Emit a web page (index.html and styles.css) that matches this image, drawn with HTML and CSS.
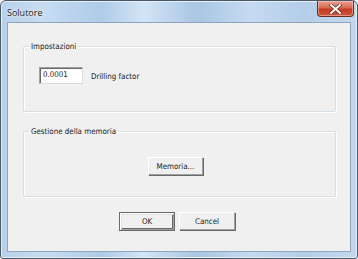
FILE: index.html
```html
<!DOCTYPE html>
<html>
<head>
<meta charset="utf-8">
<link rel="stylesheet" href="styles.css">
</head>
<body>
<div class="window">
  <div class="titlebar">
    <span class="title">Solutore</span>
    <div class="close">
      <svg width="13" height="10" viewBox="0 0 13 10">
        <path d="M2 1 L11 9 M11 1 L2 9" stroke="#6a2a1e" stroke-width="3.4" stroke-linecap="square" fill="none"/>
        <path d="M2 1 L11 9 M11 1 L2 9" stroke="#ffffff" stroke-width="2" stroke-linecap="square" fill="none"/>
      </svg>
    </div>
  </div>
  <div class="client">
    <div class="group g1">
      <span class="group-label">Impostazioni</span>
      <div class="field-row">
        <div class="textbox">0.0001</div>
        <span class="field-label">Drilling factor</span>
      </div>
    </div>
    <div class="group g2">
      <span class="group-label">Gestione della memoria</span>
      <div class="mem-row">
        <div class="btn mem">Memoria...</div>
      </div>
    </div>
    <div class="actions">
      <div class="btn default">OK</div>
      <div class="btn cancel">Cancel</div>
    </div>
  </div>
</div>
</body>
</html>
```
FILE: styles.css
```css
html, body {
  margin: 0;
  padding: 0;
  background: #ffffff;
}
body {
  width: 358px;
  height: 259px;
  overflow: hidden;
  font-family: "DejaVu Sans Condensed", "DejaVu Sans", sans-serif;
}
.window {
  box-sizing: border-box;
  width: 358px;
  height: 259px;
  border: 1px solid #4a5866;
  border-radius: 6px 6px 3px 3px;
  background: linear-gradient(90deg, #b7d0ea 0%, #c7dcf1 12%, #aecbe8 28%, #d3e4f5 40%, #a9c6e4 55%, #c5daf0 70%, #b4cee9 85%, #c3d8ee 100%);
  padding: 0 6px 6px 6px;
  display: flex;
  flex-direction: column;
  box-shadow: inset 0 0 0 1px #e6f0fa;
}
.titlebar {
  height: 21px;
  display: flex;
  align-items: flex-start;
  justify-content: space-between;
  flex-shrink: 0;
}
.title {
  font-family: "Open Sans", "Liberation Sans", sans-serif;
  font-size: 9px;
  color: #1a1a1a;
  margin-top: 5px;
  text-shadow: 0 0 4px #eaf3fb, 0 0 2px #ffffff;
}
.close {
  width: 37px;
  height: 16px;
  margin-right: -3px;
  box-sizing: border-box;
  border: 1px solid #6b2a22;
  border-top: none;
  border-radius: 0 0 4px 4px;
  background: linear-gradient(180deg, #e9a190 0%, #d96a50 45%, #c23a20 55%, #d0583a 100%);
  box-shadow: inset 0 0 0 1px rgba(255,210,200,0.5);
  display: flex;
  align-items: center;
  justify-content: center;
}
.client {
  flex: 1;
  box-sizing: border-box;
  border: 1px solid #8fa5bc;
  background: #f0f0f0;
  padding: 0 0 0 15px;
  display: flex;
  flex-direction: column;
}
.group {
  position: relative;
  box-sizing: border-box;
  width: 313px;
  height: 66px;
  border: 1px solid #d5dfe5;
  box-shadow: inset 1px 1px 0 #ffffff, 1px 1px 0 #ffffff;
  border-radius: 2px;
}
.g1 {
  margin-top: 23px;
  padding: 20px 0 0 15px;
}
.g2 {
  margin-top: 19px;
  padding: 25px 0 0 124px;
}
.group-label {
  position: absolute;
  top: -6px;
  left: 5px;
  padding: 0 2px;
  background: #f0f0f0;
  font-size: 7.9px;
  line-height: 11px;
  color: #1a1a1a;
}
.field-row {
  display: flex;
  align-items: center;
}
.textbox {
  box-sizing: border-box;
  width: 44px;
  height: 17px;
  background: #ffffff;
  border: 1px solid #a0a0a0;
  border-right-color: #dadada;
  border-bottom-color: #dadada;
  box-shadow: inset 1px 1px 0 #696969;
  font-size: 7.9px;
  line-height: 14px;
  padding-left: 3px;
  color: #1a1a1a;
}
.field-label {
  margin-left: 8px;
  font-size: 7.9px;
  color: #1a1a1a;
  margin-top: 1px;
}
.mem-row {
  display: flex;
}
.btn {
  box-sizing: border-box;
  height: 18px;
  background: #f0f0f0;
  border: 1px solid;
  border-color: #ffffff #a0a0a0 #a0a0a0 #ffffff;
  box-shadow: 1px 1px 0 #696969;
  font-size: 7.9px;
  color: #1a1a1a;
  display: flex;
  align-items: center;
  justify-content: center;
}
.mem {
  width: 55px;
}
.actions {
  display: flex;
  gap: 4px;
  margin-top: 15px;
  padding-left: 96px;
}
.default {
  width: 56px;
  height: 19px;
  border: 1px solid #696969;
  box-shadow: inset 1px 1px 0 #ffffff, inset -1px -1px 0 #a0a0a0, inset 2px 2px 0 #e3e3e3, inset -2px -2px 0 #696969;
}
.cancel {
  width: 56px;
  height: 18px;
}
```
